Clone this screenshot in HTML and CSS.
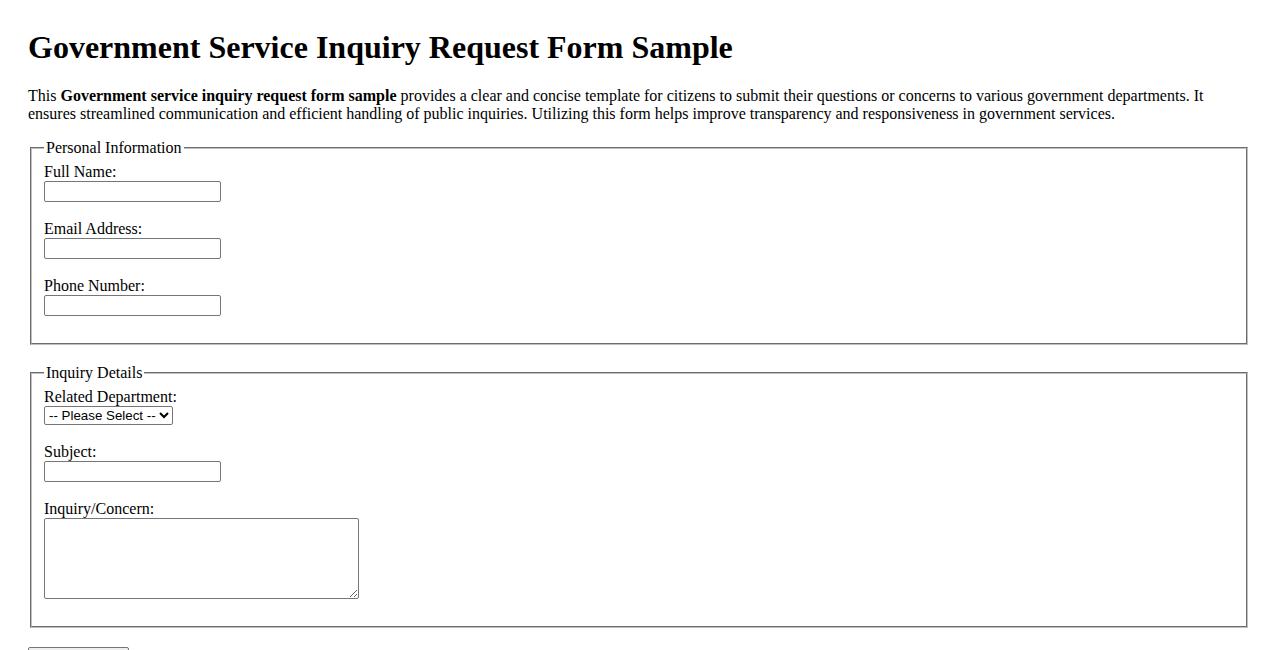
FILE: index.html
```html
<!DOCTYPE html>
<html lang="en">
<head>
    <meta charset="UTF-8">
    <meta name="viewport" content="width=device-width, initial-scale=1.0">
    <title>Government Service Inquiry Request Form Sample</title>
    <link rel="stylesheet" href="styles.css">
</head>
<body>
    <h1 class="page-title">Government Service Inquiry Request Form Sample</h1>

    <p class="intro">
        This <strong>Government service inquiry request form sample</strong> provides a clear and concise template for citizens to submit their questions or concerns to various government departments. It ensures streamlined communication and efficient handling of public inquiries. Utilizing this form helps improve transparency and responsiveness in government services.
    </p>

    <form class="inquiry-form" onsubmit="return false;">
        <fieldset class="form-group">
            <legend>Personal Information</legend>
            <div class="field">
                <label for="fullName">Full Name:</label>
                <input type="text" id="fullName" name="fullName">
            </div>
            <div class="field">
                <label for="email">Email Address:</label>
                <input type="email" id="email" name="email">
            </div>
            <div class="field">
                <label for="phone">Phone Number:</label>
                <input type="tel" id="phone" name="phone">
            </div>
        </fieldset>

        <fieldset class="form-group">
            <legend>Inquiry Details</legend>
            <div class="field">
                <label for="department">Related Department:</label>
                <select id="department" name="department">
                    <option value="">-- Please Select --</option>
                    <option>Health</option>
                    <option>Education</option>
                    <option>Transportation</option>
                    <option>Finance</option>
                </select>
            </div>
            <div class="field">
                <label for="subject">Subject:</label>
                <input type="text" id="subject" name="subject">
            </div>
            <div class="field">
                <label for="concern">Inquiry/Concern:</label>
                <textarea id="concern" name="concern"></textarea>
            </div>
        </fieldset>

        <button type="submit" class="submit-button">Submit Inquiry</button>
    </form>
</body>
</html>
```

FILE: styles.css
```css
body {
    margin: 0;
    padding: 29px 28px 28px;
    font-family: "Liberation Serif", "Times New Roman", serif;
    font-size: 16px;
    line-height: 18px;
    color: #000;
    background-color: #fff;
}
.page-title {
    font-size: 32px;
    line-height: 37px;
    font-weight: bold;
    margin: 0 0 21px;
}
.intro {
    margin: 0 0 16px;
}
.form-group {
    margin: 0 2px 19px;
    padding: 6px 12px 9px;
    border: 2px groove #c0c0c0;
}
.form-group legend {
    padding: 0 2px;
    line-height: 18px;
}
.field {
    margin-bottom: 18px;
}
.field label {
    display: block;
    line-height: 18px;
}
.field input,
.field select,
.field textarea {
    display: block;
    box-sizing: border-box;
    margin: 0;
    font-family: "Liberation Sans", Arial, sans-serif;
    font-size: 13.33px;
}
.field input {
    width: 177px;
    height: 21px;
    padding: 1px 2px;
    border: 1px solid #767676;
    border-radius: 2px;
}
.field select {
    width: 129px;
    height: 19px;
    padding: 0;
    border: 1px solid #767676;
    border-radius: 2px;
    background-color: #fff;
    color: #000;
}
.field textarea {
    width: 315px;
    height: 81px;
    padding: 2px;
    border: 1px solid #767676;
    border-radius: 2px;
    font-family: "Liberation Mono", monospace;
}
.submit-button {
    font-family: "Liberation Sans", Arial, sans-serif;
    font-size: 13.33px;
    width: 101px;
    height: 21px;
    padding: 1px 6px;
    background-color: #efefef;
    border: 1px solid #767676;
    border-radius: 2px;
    color: #000;
}
```
